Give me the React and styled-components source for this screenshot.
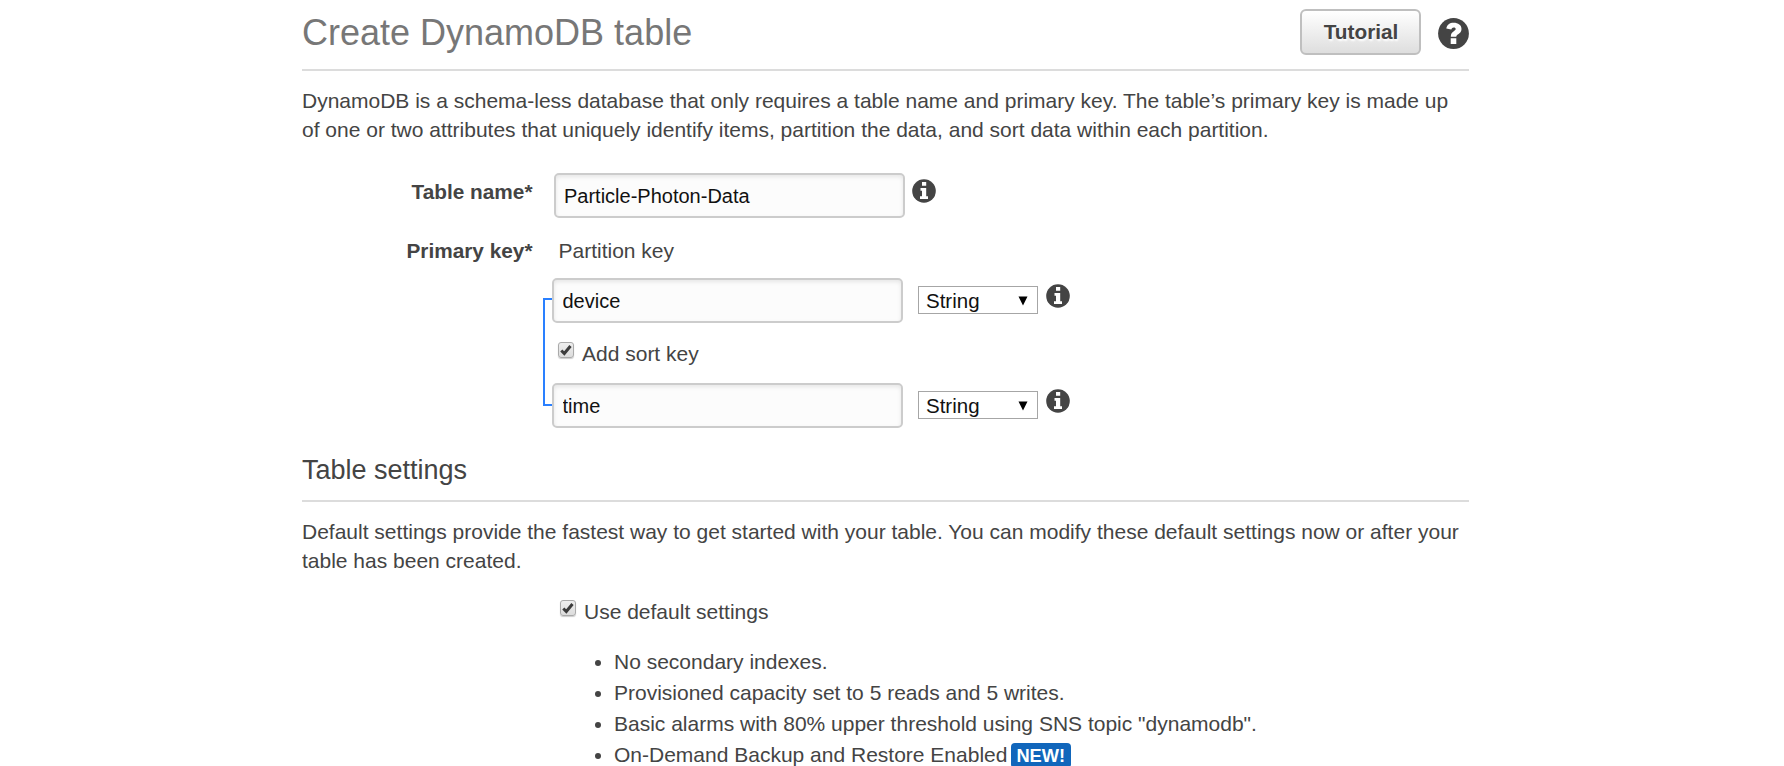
import React from 'react';
import styled, { createGlobalStyle } from 'styled-components';

const GlobalStyle = createGlobalStyle`
  * { box-sizing: border-box; }
  html, body { margin: 0; padding: 0; background: #fff; overflow: hidden; }
  body {
    font-family: "Liberation Sans", Arial, Helvetica, sans-serif;
    font-size: 21px;
    line-height: 29px;
    color: #444;
  }
  svg { display: block; }
`;

const Page = styled.main`
  width: 1167px;
  height: 766px;
  margin-left: 302px;
  overflow: hidden;
`;

const Header = styled.header`
  display: flex;
  justify-content: space-between;
  height: 71px;
  border-bottom: 2px solid #dcdcdc;
`;

const Title = styled.h1`
  margin: 12px 0 0;
  font-size: 36px;
  font-weight: 400;
  line-height: 41px;
  color: #777;
`;

const Actions = styled.div`
  display: flex;
  gap: 17px;
  padding-top: 9px;
`;

const TutorialButton = styled.button`
  width: 121px;
  height: 46px;
  padding: 0 0 1px 1px;
  border: 2px solid #bfbfbf;
  border-radius: 6px;
  background: linear-gradient(#fff, #dedede);
  font: bold 20.8px/24px "Liberation Sans", Arial, sans-serif;
  color: #444;
  text-shadow: 1px 2px 2px #fff;
`;

const HelpSlot = styled.div`
  padding-top: 9px;
`;

const Text = styled.p`
  margin: 0;
  padding-top: ${(p) => p.$top}px;
  white-space: nowrap;
`;

const Row = styled.div`
  display: flex;
  margin-top: ${(p) => p.$top || 0}px;
`;

const Label = styled.label`
  width: 230.500px;
  flex: none;
  text-align: right;
  font-size: 20.8px;
  font-weight: 700;
  padding-top: ${(p) => p.$top || 0}px;
`;

const SubLabel = styled.div`
  margin-left: 26px;
`;

const Input = styled.input`
  width: 351px;
  height: 45px;
  flex: none;
  padding: 2px 8px 0 ${(p) => p.$inset}px;
  border: 2px solid #ccc;
  border-radius: 5px;
  background: #fcfcfc;
  box-shadow: inset 0 2px 4px rgba(0, 0, 0, 0.09);
  font: 20px/24px "Liberation Sans", Arial, sans-serif;
  color: #111;
  outline: none;
`;

const NameField = styled.div`
  display: flex;
  gap: 7px;
  margin-left: 21.500px;
`;

const InfoSlot = styled.div`
  padding-top: 6px;
`;

const KeyGroup = styled.div`
  display: flex;
  margin: 13px 0 0 241px;
`;

const Bracket = styled.div`
  width: 9px;
  height: 108px;
  margin-top: 20px;
  border: 2px solid #2a80ff;
  border-right: 0;
`;

const KeyRow = styled.div`
  display: flex;
  height: 45px;
`;

const TypeSelect = styled.div`
  display: flex;
  justify-content: space-between;
  align-items: center;
  width: 120px;
  height: 28px;
  margin: 8px 8px 0 15px;
  padding: 1px 9px 0 7px;
  border: 1px solid #a6a6a6;
  font-size: 20.5px;
  line-height: 24px;
  color: #111;
`;

const CheckRow = styled.label`
  display: flex;
  gap: 8px;
  height: 29px;
  margin: ${(p) => p.$margin};
`;

const Box = styled.span`
  display: flex;
  justify-content: center;
  align-items: center;
  width: 16px;
  height: 16px;
  margin-top: 3px;
  border: 1px solid #aaa;
  border-radius: 3px;
  background: linear-gradient(#eee, #dcdcdc);
  box-shadow: 0 1px 1px rgba(0, 0, 0, 0.2);
`;

const SectionTitle = styled.h2`
  margin: 25px 0 0;
  height: 49px;
  border-bottom: 2px solid #dcdcdc;
  font-size: 27px;
  font-weight: 400;
  line-height: 34px;
`;

const List = styled.ul`
  list-style: none;
  margin: 20px 0 0 293px;
  padding: 0;
`;

const Item = styled.li`
  display: flex;
  align-items: center;
  height: 31px;
  line-height: 31px;
  white-space: nowrap;

  &::before {
    content: '';
    width: 6px;
    height: 6px;
    margin: 3px 13px 0 0;
    border-radius: 50%;
    background: #444;
  }
`;

const Badge = styled.span`
  height: 25px;
  margin: 1px 0 0 4px;
  padding: 0 6px 0 5px;
  border-radius: 4px;
  background: #1166bb;
  color: #fff;
  font-size: 18.3px;
  font-weight: 700;
  line-height: 26px;
`;

const InfoIcon = () => (
  <svg width="24" height="24" viewBox="0 0 24 24">
    <circle cx="12" cy="12" r="11.8" fill="#444" />
    <path fill="#fff" d="M10 3h4.2v3.7H10zM8.500 9h5.700v8.300H16V20H8v-2.700h2v-5.600H8.500z" />
  </svg>
);

const HelpIcon = () => (
  <svg width="31" height="31" viewBox="0 0 31 31">
    <circle cx="15.5" cy="15.5" r="15.4" fill="#444" />
    <path
      fill="#fff"
      d="M8.300 10.600C9 6.800 11.600 4.800 15.600 4.800c4.600 0 7.900 2.400 7.900 6.100 0 2.700-1.500 4.100-3.300 5.300-1.300.9-1.900 1.400-1.900 2.500h-5.500c0-3 1.200-4.300 3-5.500 1.300-.9 1.900-1.300 1.900-2.200 0-.9-.7-1.500-1.900-1.500-1.300 0-2.100.7-2.500 2.100zM12.700 20.200h5.600v5.700h-5.600z"
    />
  </svg>
);

const Tick = () => (
  <svg width="12" height="12" viewBox="0 0 12 12">
    <path d="M1.300 6.500l3 3L10.500 2" fill="none" stroke="#3c3c3c" strokeWidth="3" />
  </svg>
);

const Arrow = () => (
  <svg width="10" height="10" viewBox="0 0 10 10">
    <path d="M.5.500h9L5 9.500z" fill="#000" />
  </svg>
);

const KeyAttribute = ({ value }) => (
  <KeyRow>
    <Input $inset={8.5} defaultValue={value} spellCheck={false} />
    <TypeSelect>
      String
      <Arrow />
    </TypeSelect>
    <InfoSlot>
      <InfoIcon />
    </InfoSlot>
  </KeyRow>
);

const Checkbox = ({ children, margin }) => (
  <CheckRow $margin={margin}>
    <Box>
      <Tick />
    </Box>
    {children}
  </CheckRow>
);

export default function App() {
  return (
    <>
      <GlobalStyle />
      <Page>
        <Header>
          <Title>Create DynamoDB table</Title>
          <Actions>
            <TutorialButton>Tutorial</TutorialButton>
            <HelpSlot>
              <HelpIcon />
            </HelpSlot>
          </Actions>
        </Header>
        <Text $top={15}>
          DynamoDB is a schema-less database that only requires a table name and primary key. The table’s primary key is made up
          <br />
          of one or two attributes that uniquely identify items, partition the data, and sort data within each partition.
        </Text>
        <Row $top={29}>
          <Label $top={4}>Table name*</Label>
          <NameField>
            <Input $inset={8} defaultValue="Particle-Photon-Data" spellCheck={false} />
            <InfoSlot>
              <InfoIcon />
            </InfoSlot>
          </NameField>
        </Row>
        <Row $top={18}>
          <Label>Primary key*</Label>
          <SubLabel>Partition key</SubLabel>
        </Row>
        <KeyGroup>
          <Bracket />
          <div>
            <KeyAttribute value="device" />
            <Checkbox margin="16px 0 15px 6px">Add sort key</Checkbox>
            <KeyAttribute value="time" />
          </div>
        </KeyGroup>
        <SectionTitle>Table settings</SectionTitle>
        <Text $top={15}>
          Default settings provide the fastest way to get started with your table. You can modify these default settings now or after your
          <br />
          table has been created.
        </Text>
        <Checkbox margin="22px 0 0 258px">Use default settings</Checkbox>
        <List>
          <Item>No secondary indexes.</Item>
          <Item>Provisioned capacity set to 5 reads and 5 writes.</Item>
          <Item>Basic alarms with 80% upper threshold using SNS topic "dynamodb".</Item>
          <Item>
            On-Demand Backup and Restore Enabled<Badge>NEW!</Badge>
          </Item>
        </List>
      </Page>
    </>
  );
}
